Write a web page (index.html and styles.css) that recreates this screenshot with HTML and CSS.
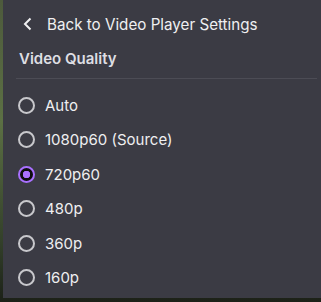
FILE: index.html
```html
<!DOCTYPE html>
<html lang="en">
<head>
    <meta charset="utf-8">
    <title>Video Quality</title>
    <link rel="stylesheet" href="styles.css">
</head>
<body>
    <div id="menu">
        <a class="back">
            <svg class="chevron" width="20" height="20" viewBox="0 0 20 20"><path d="M12.5 4.5 7 10l5.5 5.5" fill="none" stroke="currentColor" stroke-width="2"/></svg>
            <span>Back to Video Player Settings</span>
        </a>
        <div class="heading">Video Quality</div>
        <div class="options">
            <label class="option"><input type="radio" name="q"><span>Auto</span></label>
            <label class="option"><input type="radio" name="q"><span>1080p60 (Source)</span></label>
            <label class="option"><input type="radio" name="q" checked><span>720p60</span></label>
            <label class="option"><input type="radio" name="q"><span>480p</span></label>
            <label class="option"><input type="radio" name="q"><span>360p</span></label>
            <label class="option"><input type="radio" name="q"><span>160p</span></label>
        </div>
    </div>
</body>
</html>
```

FILE: styles.css
```css
html, body {
    margin: 0;
    height: 100%;
}

body {
    background: linear-gradient(#4d5a3c, #5c7044 40%, #33402a 80%, #1c2118);
    font-family: Inter, "Noto Sans", sans-serif;
    color: #efeff1;
    overflow: hidden;
}

#menu {
    margin-left: 3px;
    height: 298px;
    background: #3b3b44;
    padding: 0 4px 0 13px;
}

.back {
    display: flex;
    align-items: center;
    height: 48px;
    font-size: 15.2px;
    cursor: pointer;
}

.chevron {
    margin: 0 9px 0 2px;
}

.heading {
    font-size: 15px;
    font-weight: 600;
    padding: 1px 0 0 3px;
    height: 29px;
    border-bottom: 1px solid #4c4c55;
    color: #dedee3;
}

.options {
    padding-top: 9px;
}

.option {
    display: flex;
    align-items: center;
    height: 34.5px;
    font-size: 15px;
    cursor: pointer;
}

.option input {
    appearance: none;
    width: 17px;
    height: 17px;
    margin: 0 10px 0 2px;
    border: 2px solid #c8c8cc;
    border-radius: 50%;
    background: transparent;
}

.option input:checked {
    border-color: #a970ff;
    background: radial-gradient(circle, #a970ff 0 3.5px, #0e0e10 4px);
}
```
